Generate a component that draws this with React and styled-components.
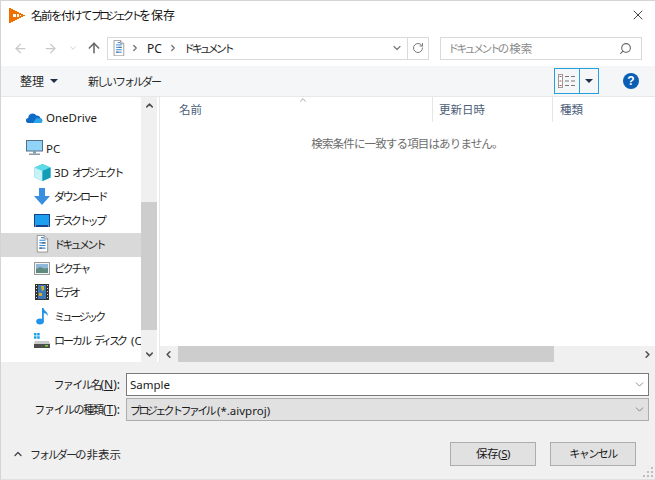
import React from "react";
import styled, { createGlobalStyle } from "styled-components";
import { ArrowLeft, ArrowRight, ArrowUp, ChevronDown, ChevronUp, ChevronLeft, ChevronRight, RotateCw, Search, X } from "lucide-react";

const GlobalStyle = createGlobalStyle`
  html, body, #root {
    margin: 0;
    height: 100%;
  }
  body {
    background: #fff;
    font-family: "Noto Sans", "Noto Sans CJK JP", sans-serif;
    font-size: 12px;
    color: #1a1a1a;
    overflow: hidden;
  }
  u { text-underline-offset: 1px; }
`;

// the reference font has narrow kana, so runs of text get their own tracking
const Tx = styled.span`
  font-size: ${p => p.$size || 11}px;
  letter-spacing: ${p => p.$t || 0}px;
  white-space: pre;
`;

const Root = styled.div`
  width: 655px;
  height: 480px;
  box-sizing: border-box;
  border: 1px solid #d4d4d4;
  border-right: 0;
  border-bottom-color: #e0e0e0;
  display: flex;
  flex-direction: column;
  background: #fff;
`;

const TitleBar = styled.div`
  height: 29px;
  flex-shrink: 0;
  box-sizing: border-box;
  display: flex;
  align-items: center;
  padding: 0 9px 1px 8px;
  gap: 6px;
`;

const TitleText = styled.div`
  flex: 1;
  color: #111;
  white-space: nowrap;
`;

const NavBar = styled.div`
  height: 36px;
  flex-shrink: 0;
  display: flex;
  align-items: center;
  padding-left: 3px;
`;

const NavBtn = styled.div`
  width: ${p => p.$w}px;
  display: flex;
  justify-content: center;
  color: ${p => p.$color};
`;

const AddressBox = styled.div`
  margin-left: 1px;
  width: 322px;
  height: 23px;
  box-sizing: border-box;
  border: 1px solid #d9d9d9;
  display: flex;
  align-items: center;
  padding-left: 4px;
  color: #222;
`;

const Crumb = styled.span`
  display: flex;
  align-items: center;
  margin-left: ${p => p.$ml || 0}px;
`;

const AddressEnd = styled.div`
  margin-left: auto;
  display: flex;
  align-items: center;
  height: 100%;
`;

const AddressCell = styled.div`
  width: ${p => p.$w}px;
  height: 100%;
  display: flex;
  align-items: center;
  justify-content: center;
  color: #7a7a7a;
  border-left: ${p => (p.$line ? "1px solid #d9d9d9" : "0")};
`;

const SearchBox = styled.div`
  margin-left: 11px;
  width: 202px;
  height: 23px;
  box-sizing: border-box;
  border: 1px solid #d9d9d9;
  display: flex;
  align-items: center;
  justify-content: space-between;
  padding: 0 9px 0 7px;
  color: #8a8a8a;
  svg { color: #666; transform: scaleX(-1); }
`;

const Toolbar = styled.div`
  height: 31px;
  flex-shrink: 0;
  box-sizing: border-box;
  background: #f5f6f7;
  border-bottom: 1px solid #e8e8e8;
  display: flex;
  align-items: center;
  padding: 0 0 1px 19px;
  color: #2a2a2a;
`;

const Caret = styled.i`
  display: inline-block;
  width: 0;
  height: 0;
  border-left: 4px solid transparent;
  border-right: 4px solid transparent;
  border-top: 4px solid #1f2f45;
  margin-left: ${p => p.$ml || 0}px;
`;

const ToolItem = styled.div`
  display: flex;
  align-items: center;
  margin-left: ${p => p.$ml || 0}px;
`;

const ViewButton = styled.div`
  margin-left: auto;
  width: 45px;
  height: 26px;
  box-sizing: border-box;
  border: 1px solid #26a0da;
  display: flex;
  align-items: center;
`;

const ViewCell = styled.div`
  height: 100%;
  width: ${p => p.$w}px;
  display: flex;
  align-items: center;
  justify-content: center;
  border-right: ${p => (p.$line ? "1px solid #26a0da" : "0")};
`;

const HelpBadge = styled.div`
  width: 16px;
  height: 16px;
  border-radius: 50%;
  background: #0a5fb4;
  color: #fff;
  font: bold 12px/16px "Liberation Sans", sans-serif;
  text-align: center;
  margin: 0 16px 0 24px;
`;

const Body = styled.div`
  height: 265px;
  flex-shrink: 0;
  display: flex;
`;

const Sidebar = styled.div`
  width: 140px;
  flex-shrink: 0;
  overflow: hidden;
  padding-top: 9px;
  box-sizing: border-box;
`;

const NavRow = styled.div`
  height: 24px;
  box-sizing: border-box;
  padding-bottom: 2px;
  display: flex;
  align-items: center;
  white-space: nowrap;
  padding-left: ${p => (p.$child ? 31 : 23)}px;
  background: ${p => (p.$active ? "#d9d9d9" : "transparent")};
  margin-bottom: ${p => p.$mb || 0}px;
  color: #1c1c1c;
  font-size: 11.5px;
`;

const NavIcon = styled.span`
  width: 20px;
  height: 18px;
  display: flex;
  align-items: center;
  justify-content: center;
  margin-right: 2px;
  flex-shrink: 0;
`;

const VScroll = styled.div`
  width: 16px;
  flex-shrink: 0;
  background: #f0f0f0;
  display: flex;
  flex-direction: column;
  align-items: center;
  justify-content: space-between;
  color: #505050;
  position: relative;
`;

const VThumb = styled.div`
  position: absolute;
  top: 105px;
  left: 0;
  width: 100%;
  height: 128px;
  background: #cdcdcd;
`;

const ScrollArrow = styled.div`
  height: 16px;
  min-width: 16px;
  display: flex;
  align-items: center;
  justify-content: center;
`;

const Gutter = styled.div`
  width: 3px;
  flex-shrink: 0;
  border-right: 1px solid #e8e8e8;
  box-sizing: border-box;
`;

const Main = styled.div`
  flex: 1;
  display: flex;
  flex-direction: column;
  min-width: 0;
`;

const Header = styled.div`
  height: 25px;
  flex-shrink: 0;
  display: flex;
  position: relative;
  color: #4c607a;
  font-size: 11.5px;
`;

const HeaderCell = styled.div`
  width: ${p => p.$w}px;
  box-sizing: border-box;
  padding-left: ${p => p.$pl}px;
  line-height: 25px;
  border-right: ${p => (p.$line ? "1px solid #e5e5e5" : "0")};
`;

const SortMark = styled.div`
  position: absolute;
  left: 138px;
  top: -2px;
  color: #7a7a7a;
  display: flex;
`;

const Empty = styled.div`
  flex: 1;
  text-align: center;
  padding-top: 13px;
  padding-right: 1px;
  color: #6d6d6d;
  line-height: 18px;
`;

const HScroll = styled.div`
  height: 16px;
  flex-shrink: 0;
  background: #f0f0f0;
  display: flex;
  align-items: center;
  justify-content: space-between;
  color: #505050;
`;

const HTrack = styled.div`
  flex: 1;
  height: 100%;
`;

const HThumb = styled.div`
  width: 376px;
  height: 100%;
  margin-left: 2px;
  background: #cdcdcd;
`;

const Footer = styled.div`
  flex: 1;
  background: #f0f0f0;
  padding-top: 11px;
  display: flex;
  flex-direction: column;
  position: relative;
`;

const FormRow = styled.div`
  display: flex;
  align-items: center;
  margin: 0 6px 2px 0;
  height: 23px;
`;

const FormLabel = styled.label`
  width: 125px;
  text-align: right;
  padding-right: 6px;
  box-sizing: border-box;
  color: #1a1a1a;
  white-space: nowrap;
`;

const Field = styled.div`
  flex: 1;
  height: 23px;
  box-sizing: border-box;
  border: 1px solid ${p => (p.$select ? "#adadad" : "#7a7a7a")};
  background: ${p => (p.$select ? "#e1e1e1" : "#fff")};
  display: flex;
  align-items: center;
  justify-content: space-between;
  padding: 0 2px 0 3px;
  color: #1a1a1a;
  font-size: 11.5px;
  svg { color: #555; }
`;

const BottomRow = styled.div`
  display: flex;
  align-items: center;
  margin-top: 19px;
  padding: 0 19px 0 11px;
`;

const FolderToggle = styled.div`
  display: flex;
  align-items: center;
  gap: 6px;
  margin-right: auto;
  color: #2a2a2a;
  svg { color: #444; }
`;

const Button = styled.button`
  width: 86px;
  height: 24px;
  box-sizing: border-box;
  border: 1px solid #adadad;
  background: #e1e1e1;
  font: inherit;
  color: #1a1a1a;
  margin-left: ${p => p.$ml || 0}px;
  padding: 0;
  line-height: 20px;
`;

const Grip = styled.svg`
  position: absolute;
  right: 1px;
  bottom: 1px;
`;

const Logo = () => (
  <svg width="16" height="15" viewBox="0 0 16 15">
    <path d="M0 0h2v1h2v1h2v1h2v1h2v1h2v1h2v1h2v1h-2v1h-2v1h-2v1H8v1H6v1H4v1H2v1H0z" fill="#f07000" />
    <path d="M4 6h3v3H4zM8 6h2v3H8zM11 7h1v1h-1z" fill="#fff" />
  </svg>
);

const DocIcon = ({ size = 16 }) => (
  <svg width={size} height={size * 1.25} viewBox="0 0 16 20">
    <path d="M2.5.5h8l4 4v15h-12z" fill="#fdfdfd" stroke="#8d8d8d" />
    <path d="M10.5.5v4h4" fill="#e6e6e6" stroke="#8d8d8d" />
    <path d="M7 3h3M5 6h7M5 9h7M5 12h7M5 15h7" stroke="#2f8ae0" strokeWidth="1.2" />
    <path d="M8 9h4M5 15h3" stroke="#666" strokeWidth="1.2" />
  </svg>
);

const OneDriveIcon = () => (
  <svg width="17" height="11" viewBox="0 0 17 11">
    <path d="M2.5 11A2.5 2.5 0 0 1 2.3 6 4.3 4.3 0 0 1 10.3 3.6 3.7 3.7 0 0 1 14.5 6.3 2.4 2.4 0 0 1 14.5 11z" fill="#0f6cc4" />
    <path d="M7 11l3.5-5 4 .4A2.4 2.4 0 0 1 14.5 11z" fill="#2aa5ea" />
  </svg>
);

const PcIcon = () => (
  <svg width="17" height="16" viewBox="0 0 17 16">
    <rect x=".5" y=".5" width="16" height="10.5" fill="#8fd3f7" stroke="#55708a" />
    <rect x="7" y="11" width="3" height="2.5" fill="#8a99a6" />
    <rect x="3" y="13.5" width="11" height="1.5" fill="#8a99a6" />
  </svg>
);

const CubeIcon = () => (
  <svg width="17" height="17" viewBox="0 0 17 17">
    <path d="M8.5 0l8 3.5v10l-8 3.5-8-3.5v-10z" fill="#28bcd6" />
    <path d="M8.5 0l8 3.5-8 3.5-8-3.5z" fill="#5ed9e6" />
    <path d="M.5 3.5l8 3.5v10l-8-3.5z" fill="#c8f2f5" />
    <path d="M8.5 7l8-3.5v10l-8 3.5z" fill="#159db8" />
  </svg>
);

const DownloadIcon = () => (
  <svg width="16" height="17" viewBox="0 0 16 17">
    <path d="M5 0h6v8h5l-8 9-8-9h5z" fill="#3a8fe0" />
  </svg>
);

const DesktopIcon = () => (
  <svg width="16" height="13" viewBox="0 0 16 13">
    <rect width="16" height="13" fill="#17418c" />
    <rect x="1" y="1" width="14" height="10" fill="#1c9fee" />
    <path d="M1 11.5h1v1H1zM14 11.5h1v1h-1z" fill="#cfe8f8" />
  </svg>
);

const PictureIcon = () => (
  <svg width="16" height="13" viewBox="0 0 16 13">
    <rect x=".5" y=".5" width="15" height="12" fill="#f4f4f4" stroke="#9a9a9a" />
    <rect x="2" y="2" width="12" height="5" fill="#8fb8d8" />
    <path d="M2 7l4-2 4 1.5L14 6v5H2z" fill="#5f8a82" />
  </svg>
);

const VideoIcon = () => (
  <svg width="14" height="16" viewBox="0 0 14 16">
    <rect width="14" height="16" fill="#333" />
    <rect x="3" y="1" width="8" height="14" fill="#3f78b8" />
    <path d="M6 2h3v4l-2 1zM4 9h3v3H4z" fill="#d8b020" />
    <path d="M1 1h1v1H1zM1 4h1v1H1zM1 7h1v1H1zM1 10h1v1H1zM1 13h1v1H1zM12 1h1v1h-1zM12 4h1v1h-1zM12 7h1v1h-1zM12 10h1v1h-1zM12 13h1v1h-1z" fill="#ddd" />
  </svg>
);

const MusicIcon = () => (
  <svg width="13" height="17" viewBox="0 0 13 17">
    <ellipse cx="4" cy="13.5" rx="3.8" ry="3" fill="#1f94e8" />
    <path d="M6 0h1.6c.4 3 4.4 3.5 4.4 8-1-2-3-3-4.2-3v8.5H6z" fill="#1f94e8" />
  </svg>
);

const DriveIcon = () => (
  <svg width="16" height="15" viewBox="0 0 16 15">
    <path d="M0 0h2.5v2.5H0zM3.2 0h2.5v2.5H3.2zM0 3.2h2.5v2.5H0zM3.2 3.2h2.5v2.5H3.2z" fill="#19a2e8" />
    <path d="M1 8h14l1 3H0z" fill="#c9c9c9" />
    <rect y="11" width="16" height="4" fill="#4d4d4d" />
    <rect x="11" y="12" width="3" height="1.5" fill="#7ad23c" />
  </svg>
);

const DetailsIcon = () => (
  <svg width="18" height="14" viewBox="0 0 18 14">
    <rect x=".5" y=".5" width="4" height="13" fill="#fff" stroke="#9a9a9a" />
    <path d="M1.5 2.5h2M1.5 7h2M1.5 11.5h2" stroke="#c04a4a" />
    <path d="M7 2.5h4M13 2.5h4M7 7h4M13 7h4M7 11.5h4M13 11.5h4" stroke="#777" />
  </svg>
);

const places = [
  { icon: <CubeIcon />, key: "3d", parts: [["3D ", 0, 11.5], ["オブジェクト", -2.7]] },
  { icon: <DownloadIcon />, key: "dl", parts: [["ダウンロード", -2.3]] },
  { icon: <DesktopIcon />, key: "desk", parts: [["デスクトップ", -2.6]] },
  { icon: <DocIcon size={14} />, key: "doc", active: true, parts: [["ドキュメント", -2.7]] },
  { icon: <PictureIcon />, key: "pic", parts: [["ピクチャ", -2.2]] },
  { icon: <VideoIcon />, key: "vid", parts: [["ビデオ", -3]] },
  { icon: <MusicIcon />, key: "mus", parts: [["ミュージック", -2.7]] },
  { icon: <DriveIcon />, key: "c", parts: [["ローカル", -2], ["  ", -1], ["ディスク", -3], ["  (C:)", 0, 11.5]] },
];

export default function App() {
  return (
    <Root>
      <GlobalStyle />
      <TitleBar>
        <Logo />
        <TitleText>
          <Tx $size={11.5} $t={-1.5}>名前を付けて</Tx>
          <Tx $t={-3}>プロジェクト</Tx>
          <Tx $size={12}>を保存</Tx>
        </TitleText>
        <X size={16} strokeWidth={1.2} color="#111" />
      </TitleBar>
      <NavBar>
        <NavBtn $w={32} $color="#c9c9c9"><ArrowLeft size={15} strokeWidth={2} /></NavBtn>
        <NavBtn $w={28} $color="#c9c9c9"><ArrowRight size={15} strokeWidth={2} /></NavBtn>
        <NavBtn $w={18} $color="#c9c9c9"><ChevronDown size={10} strokeWidth={2} /></NavBtn>
        <NavBtn $w={24} $color="#6b6b6b"><ArrowUp size={16} strokeWidth={2.4} /></NavBtn>
        <AddressBox>
          <DocIcon size={13} />
          <Crumb $ml={5}><ChevronRight size={10} strokeWidth={3} color="#707070" /></Crumb>
          <Crumb $ml={7}>PC</Crumb>
          <Crumb $ml={6}><ChevronRight size={10} strokeWidth={3} color="#707070" /></Crumb>
          <Crumb $ml={6}><Tx $t={-3}>ドキュメント</Tx></Crumb>
          <AddressEnd>
            <AddressCell $w={21}><ChevronDown size={12} strokeWidth={2.4} /></AddressCell>
            <AddressCell $w={20} $line><RotateCw size={12} strokeWidth={2} /></AddressCell>
          </AddressEnd>
        </AddressBox>
        <SearchBox>
          <span>
            <Tx $t={-2.7}>ドキュメント</Tx>
            <Tx $size={11.5}>の検索</Tx>
          </span>
          <Search size={13} strokeWidth={2} />
        </SearchBox>
      </NavBar>
      <Toolbar>
        <ToolItem>整理<Caret $ml={6} /></ToolItem>
        <ToolItem $ml={30}><Tx $t={-2}>新しいフォルダー</Tx></ToolItem>
        <ViewButton>
          <ViewCell $w={25} $line><DetailsIcon /></ViewCell>
          <ViewCell $w={18}><Caret /></ViewCell>
        </ViewButton>
        <HelpBadge>?</HelpBadge>
      </Toolbar>
      <Body>
        <Sidebar>
          <NavRow $mb={7}><NavIcon><OneDriveIcon /></NavIcon>OneDrive</NavRow>
          <NavRow><NavIcon><PcIcon /></NavIcon>PC</NavRow>
          {places.map(p => (
            <NavRow key={p.key} $child $active={p.active}>
              <NavIcon>{p.icon}</NavIcon>
              {p.parts.map(([text, t, size]) => (
                <Tx key={text} $t={t} $size={size}>{text}</Tx>
              ))}
            </NavRow>
          ))}
        </Sidebar>
        <VScroll>
          <ScrollArrow><ChevronUp size={11} strokeWidth={3.4} /></ScrollArrow>
          <VThumb />
          <ScrollArrow><ChevronDown size={11} strokeWidth={3.4} /></ScrollArrow>
        </VScroll>
        <Gutter />
        <Main>
          <Header>
            <SortMark><ChevronUp size={10} strokeWidth={1.6} /></SortMark>
            <HeaderCell $w={273} $pl={19} $line>名前</HeaderCell>
            <HeaderCell $w={120} $pl={6} $line>更新日時</HeaderCell>
            <HeaderCell $w={100} $pl={7}>種類</HeaderCell>
          </Header>
          <Empty><Tx $size={11.5} $t={-.85}>検索条件に一致する項目はありません。</Tx></Empty>
          <HScroll>
            <ScrollArrow><ChevronLeft size={11} strokeWidth={3.4} /></ScrollArrow>
            <HTrack><HThumb /></HTrack>
            <ScrollArrow><ChevronRight size={11} strokeWidth={3.4} /></ScrollArrow>
          </HScroll>
        </Main>
      </Body>
      <Footer>
        <FormRow>
          <FormLabel><Tx $t={-1.6}>ファイル名</Tx>(<u>N</u>):</FormLabel>
          <Field>Sample<ChevronDown size={13} strokeWidth={1.2} /></Field>
        </FormRow>
        <FormRow>
          <FormLabel><Tx $t={-1.2}>ファイルの種類</Tx>(<u>T</u>):</FormLabel>
          <Field $select>
            <span><Tx $t={-2.6}>プロジェクトファイル</Tx> (*.aivproj)</span>
            <ChevronDown size={13} strokeWidth={1.2} />
          </Field>
        </FormRow>
        <BottomRow>
          <FolderToggle>
            <ChevronUp size={12} strokeWidth={2.6} />
            <span><Tx $t={-2}>フォルダー</Tx><Tx $size={11.5}>の非表示</Tx></span>
          </FolderToggle>
          <Button><Tx $size={11.5} $t={-.4}>保存(<u>S</u>)</Tx></Button>
          <Button $ml={14}><Tx $t={-1.5}>キャンセル</Tx></Button>
        </BottomRow>
        <Grip width="11" height="11" viewBox="0 0 11 11" fill="#bdbdbd">
          <path d="M8 0h2v2H8zM4 4h2v2H4zM8 4h2v2H8zM0 8h2v2H0zM4 8h2v2H4zM8 8h2v2H8z" />
        </Grip>
      </Footer>
    </Root>
  );
}
